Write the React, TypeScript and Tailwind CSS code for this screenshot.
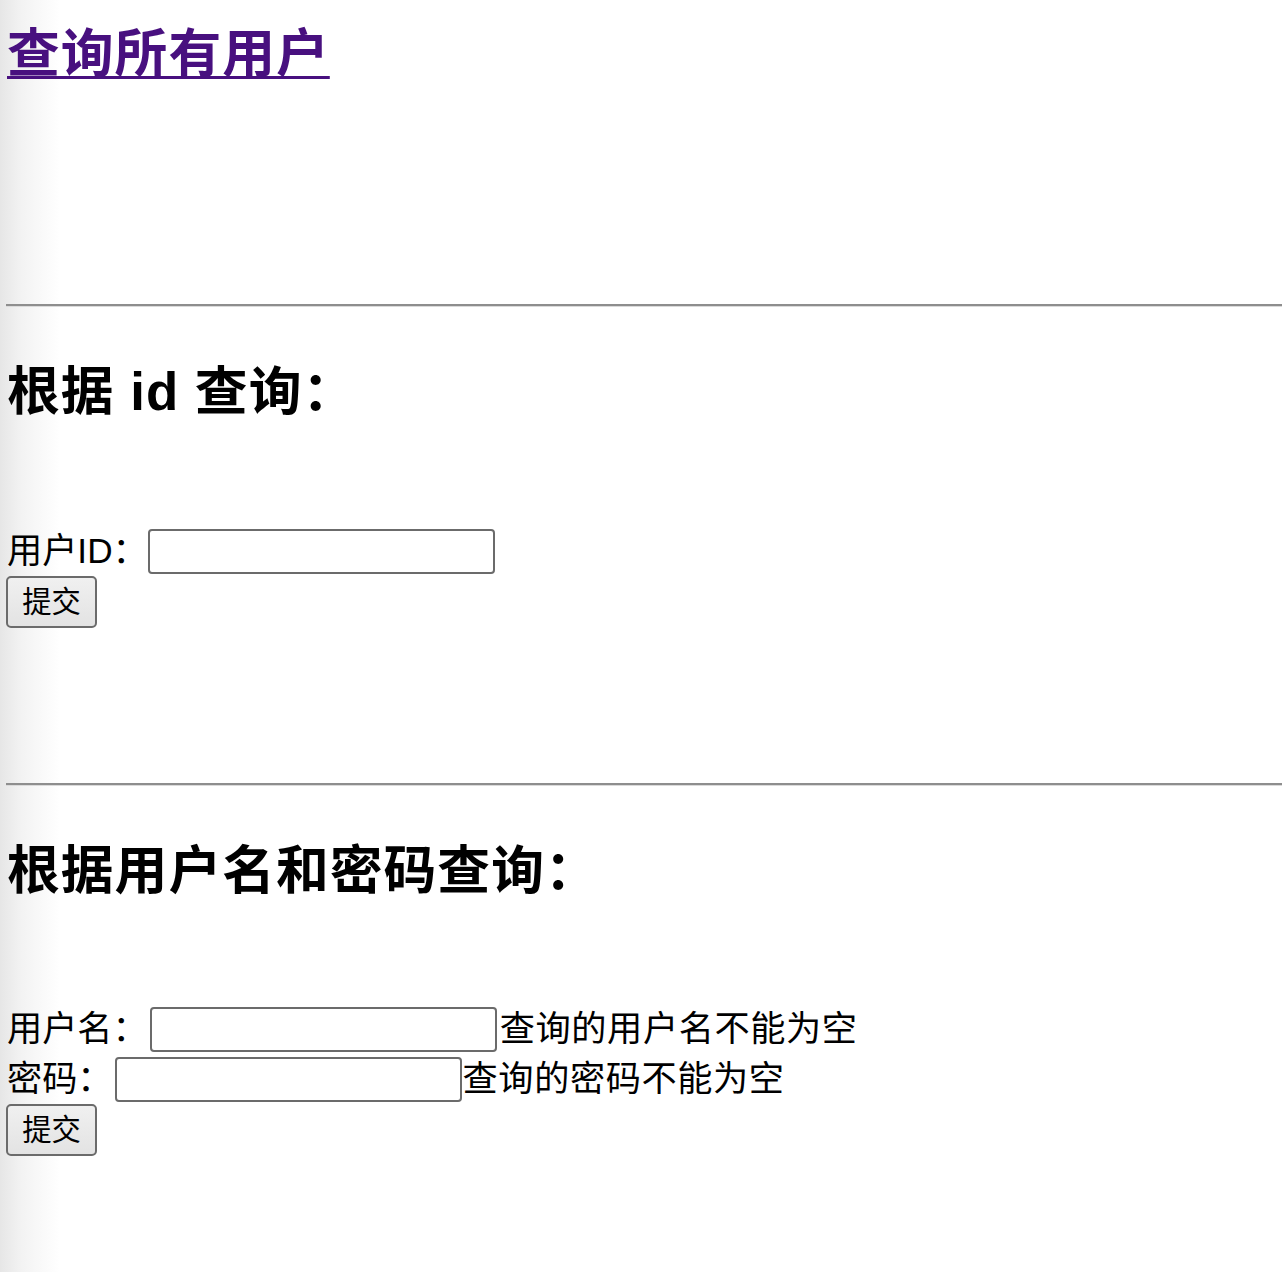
function Hr({ className }: { className: string }) {
  return (
    <div className={"-ml-[1px] border-b border-[#dadada] " + className}>
      <div className="h-[2px] bg-[#8e8e8e]" />
    </div>
  );
}

function Field({ w = "w-[347px]" }: { w?: string }) {
  return (
    <input
      type="text"
      className={"h-[45px] rounded-[4px] border-2 border-[#6b6b6b] bg-white outline-none " + w}
    />
  );
}

function SubmitButton() {
  return (
    <button
      type="submit"
      className="-ml-[1px] flex h-[52px] w-[91px] items-center justify-center rounded-[5px] border-2 border-[#6b6b6b] bg-[linear-gradient(to_bottom,#f0f0f0,#e3e3e3)] text-[29.3px] leading-none text-black"
    >
      提交
    </button>
  );
}

export default function App() {
  return (
    <div className="min-h-[1272px] bg-[linear-gradient(to_right,#e6e6e6_0px,#f3f3f3_22px,#ffffff_60px)] pl-[7px] pt-[22px] font-['Liberation_Sans','Noto_Sans_CJK_SC',sans-serif] text-black">
      <h2 className="h-[64px] text-[52.8px] font-bold leading-[64px] tracking-[1px]">
        <a href="#" className="text-[#48107f] underline decoration-[3px] underline-offset-[4px]">
          查询所有用户
        </a>
      </h2>

      <Hr className="mt-[218px]" />

      <h2 className="mt-[53px] h-[64px] text-[52.8px] font-bold leading-[64px] tracking-[1px]">根据 id 查询：</h2>

      <form className="mt-[102px]">
        <div className="flex h-[50px] items-center text-[35.2px]">
          <span>用户ID：</span>
          <Field />
        </div>
        <SubmitButton />
      </form>

      <Hr className="mt-[155px]" />

      <h2 className="mt-[53px] h-[64px] text-[52.8px] font-bold leading-[64px] tracking-[1px]">根据用户名和密码查询：</h2>

      <form className="mt-[101px]">
        <div className="flex h-[50px] items-center text-[35.2px]">
          <span>用户名：</span>
          <Field w="ml-[2px] w-[347px]" />
          <span className="ml-[3px] tracking-[0.6px]">查询的用户名不能为空</span>
        </div>
        <div className="flex h-[50px] items-center text-[35.2px]">
          <span>密码：</span>
          <Field w="ml-[2px] w-[347px]" />
          <span className="ml-[1px] tracking-[0.6px]">查询的密码不能为空</span>
        </div>
        <SubmitButton />
      </form>
    </div>
  );
}
